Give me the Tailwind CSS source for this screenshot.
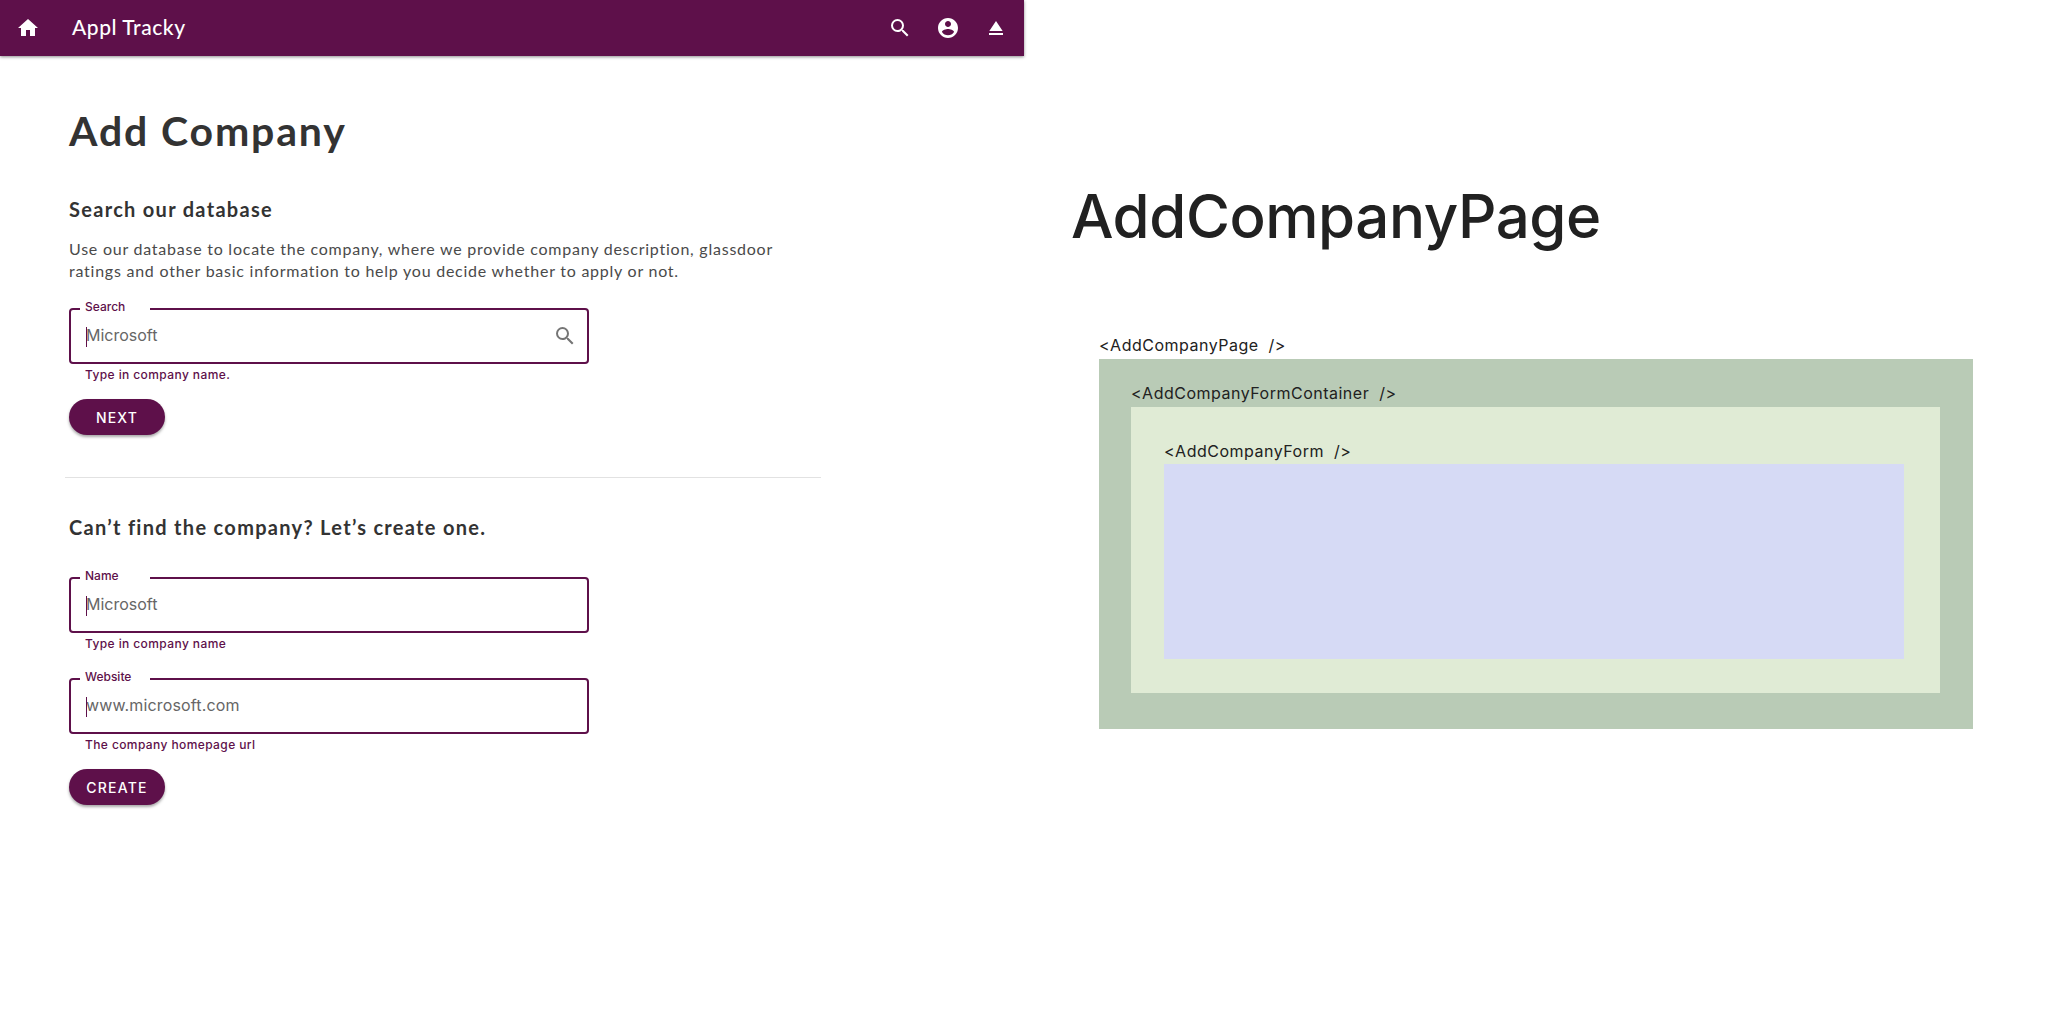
<!DOCTYPE html>
<html>
<head>
<meta charset="utf-8">
<script src="https://cdn.jsdelivr.net/npm/@tailwindcss/browser@4"></script>
</head>
<body class="bg-white">
<div class="flex w-[2048px] h-[1024px] overflow-hidden">
  <div class="w-[1024px] shrink-0">
    <header class="h-14 bg-[#5e104a] shadow-[0_1px_3px_rgba(0,0,0,0.45)] flex items-center pl-4 pr-4 text-white">
      <svg class="w-6 h-6" viewBox="0 0 24 24" fill="#fff"><path d="M10 20v-6h4v6h5v-8h3L12 3 2 12h3v8z"/></svg>
      <div class="ml-8 -mt-[3px] text-[21px] font-['Lato',sans-serif] font-medium tracking-[0.55px]">Appl Tracky</div>
      <div class="ml-auto flex items-center gap-6">
        <svg class="w-6 h-6" viewBox="0 0 24 24" fill="#fff"><path d="M15.5 14h-.79l-.28-.27A6.47 6.47 0 0 0 16 9.5 6.5 6.5 0 1 0 9.5 16c1.61 0 3.09-.59 4.23-1.57l.27.28v.79l5 4.99L20.49 19l-4.99-5zm-6 0C7.01 14 5 11.99 5 9.5S7.01 5 9.5 5 14 7.01 14 9.5 11.99 14 9.5 14z"/></svg>
        <svg class="w-6 h-6" viewBox="0 0 24 24" fill="#fff"><path d="M12 2C6.48 2 2 6.48 2 12s4.48 10 10 10 10-4.48 10-10S17.52 2 12 2zm0 3c1.66 0 3 1.34 3 3s-1.34 3-3 3-3-1.34-3-3 1.34-3 3-3zm0 14.2a7.2 7.2 0 0 1-6-3.22c.03-1.99 4-3.08 6-3.08 1.99 0 5.97 1.09 6 3.08a7.2 7.2 0 0 1-6 3.22z"/></svg>
        <svg class="w-6 h-6" viewBox="0 0 24 24" fill="#fff"><path d="M5 17h14v2H5zm7-12L5.33 15h13.34z"/></svg>
      </div>
    </header>
    <main class="pl-[69px] text-[#333333] font-['Lato',sans-serif]">
      <h1 class="mt-[50px] text-[41px] leading-[50px] font-bold tracking-[1.85px]">Add Company</h1>
      <h2 class="mt-[40px] text-[20px] leading-[26px] font-bold tracking-[1.3px]">Search our database</h2>
      <p class="mt-[16px] w-[740px] text-[16px] leading-[22px] font-normal tracking-[0.76px] text-[#4a4a4a]">Use our database to locate the company, where we provide company description, glassdoor ratings and other basic information to help you decide whether to apply or not.</p>

      <div class="mt-[26px] relative w-[520px] h-14 rounded border-2 border-[#5e104a] flex items-center pl-[15px] pr-[10px]">
        <span class="absolute left-[9px] -top-[11px] w-[70px] bg-white pl-[5px] text-[12px] leading-4 font-medium text-[#5e104a] font-['Inter',sans-serif]">Search</span>
        <span class="w-px h-5 bg-[#5e104a] absolute left-[15px] top-[17px]"></span>
        <span class="-mt-[2px] text-[16px] text-[#666666] font-['Inter',sans-serif]">Microsoft</span>
        <svg class="ml-auto w-6 h-6" viewBox="0 0 24 24" fill="#757575"><path d="M15.5 14h-.79l-.28-.27A6.47 6.47 0 0 0 16 9.5 6.5 6.5 0 1 0 9.5 16c1.61 0 3.09-.59 4.23-1.57l.27.28v.79l5 4.99L20.49 19l-4.99-5zm-6 0C7.01 14 5 11.99 5 9.5S7.01 5 9.5 5 14 7.01 14 9.5 11.99 14 9.5 14z"/></svg>
      </div>
      <div class="pl-4 mt-[3px] text-[12px] leading-4 font-medium tracking-[0.4px] text-[#5e104a] font-['Inter',sans-serif]">Type in company name.</div>
      <button class="mt-[16px] w-24 h-9 rounded-[18px] bg-[#5e104a] text-white text-[14px] tracking-[1.2px] font-medium font-['Inter',sans-serif] shadow-[0_2px_3px_rgba(0,0,0,0.35)]">NEXT</button>

      <div class="mt-[42px] -ml-[4px] w-[756px] h-px bg-[#e2e2e2]"></div>

      <h2 class="mt-[36px] text-[20px] leading-[26px] font-bold tracking-[1.3px]">Can’t find the company? Let’s create one.</h2>

      <div class="mt-[37px] relative w-[520px] h-14 rounded border-2 border-[#5e104a] flex items-center pl-[15px]">
        <span class="absolute left-[9px] -top-[11px] w-[70px] bg-white pl-[5px] text-[12px] leading-4 font-medium text-[#5e104a] font-['Inter',sans-serif]">Name</span>
        <span class="w-px h-5 bg-[#5e104a] absolute left-[15px] top-[17px]"></span>
        <span class="-mt-[2px] text-[16px] text-[#666666] font-['Inter',sans-serif]">Microsoft</span>
      </div>
      <div class="pl-4 mt-[3px] text-[12px] leading-4 font-medium tracking-[0.4px] text-[#5e104a] font-['Inter',sans-serif]">Type in company name</div>

      <div class="mt-[26px] relative w-[520px] h-14 rounded border-2 border-[#5e104a] flex items-center pl-[15px]">
        <span class="absolute left-[9px] -top-[11px] w-[70px] bg-white pl-[5px] text-[12px] leading-4 font-medium text-[#5e104a] font-['Inter',sans-serif]">Website</span>
        <span class="w-px h-5 bg-[#5e104a] absolute left-[15px] top-[17px]"></span>
        <span class="-mt-[2px] text-[16px] tracking-[0.15px] text-[#666666] font-['Inter',sans-serif]">www.microsoft.com</span>
      </div>
      <div class="pl-4 mt-[3px] text-[12px] leading-4 font-medium tracking-[0.4px] text-[#5e104a] font-['Inter',sans-serif]">The company homepage url</div>
      <button class="mt-[16px] w-24 h-9 rounded-[18px] bg-[#5e104a] text-white text-[14px] tracking-[1.2px] font-medium font-['Inter',sans-serif] shadow-[0_2px_3px_rgba(0,0,0,0.35)]">CREATE</button>
    </main>
  </div>
  <div class="w-[1024px] shrink-0 pl-[47px] font-['Inter',sans-serif] text-[#212121]">
    <h1 class="mt-[176px] text-[60px] leading-[80px] font-medium tracking-[-0.45px]">AddCompanyPage</h1>
    <div class="ml-[28px] mt-[77px] w-[874px]">
      <div class="text-[16px] leading-[24px] h-[26px] tracking-[0.5px]">&lt;AddCompanyPage&nbsp; /&gt;</div>
      <div class="h-[370px] bg-[#b9cbb6] pl-8 pr-[33px] pt-[22px]">
        <div class="text-[16px] leading-[24px] h-[26px] tracking-[0.5px]">&lt;AddCompanyFormContainer&nbsp; /&gt;</div>
        <div class="h-[286px] bg-[#e0ebd5] pl-[33px] pr-[36px] pt-[32px]">
          <div class="text-[16px] leading-[24px] h-[25px] tracking-[0.5px]">&lt;AddCompanyForm&nbsp; /&gt;</div>
          <div class="h-[195px] bg-[#d6daf5]"></div>
        </div>
      </div>
    </div>
  </div>
</div>
</body>
</html>
